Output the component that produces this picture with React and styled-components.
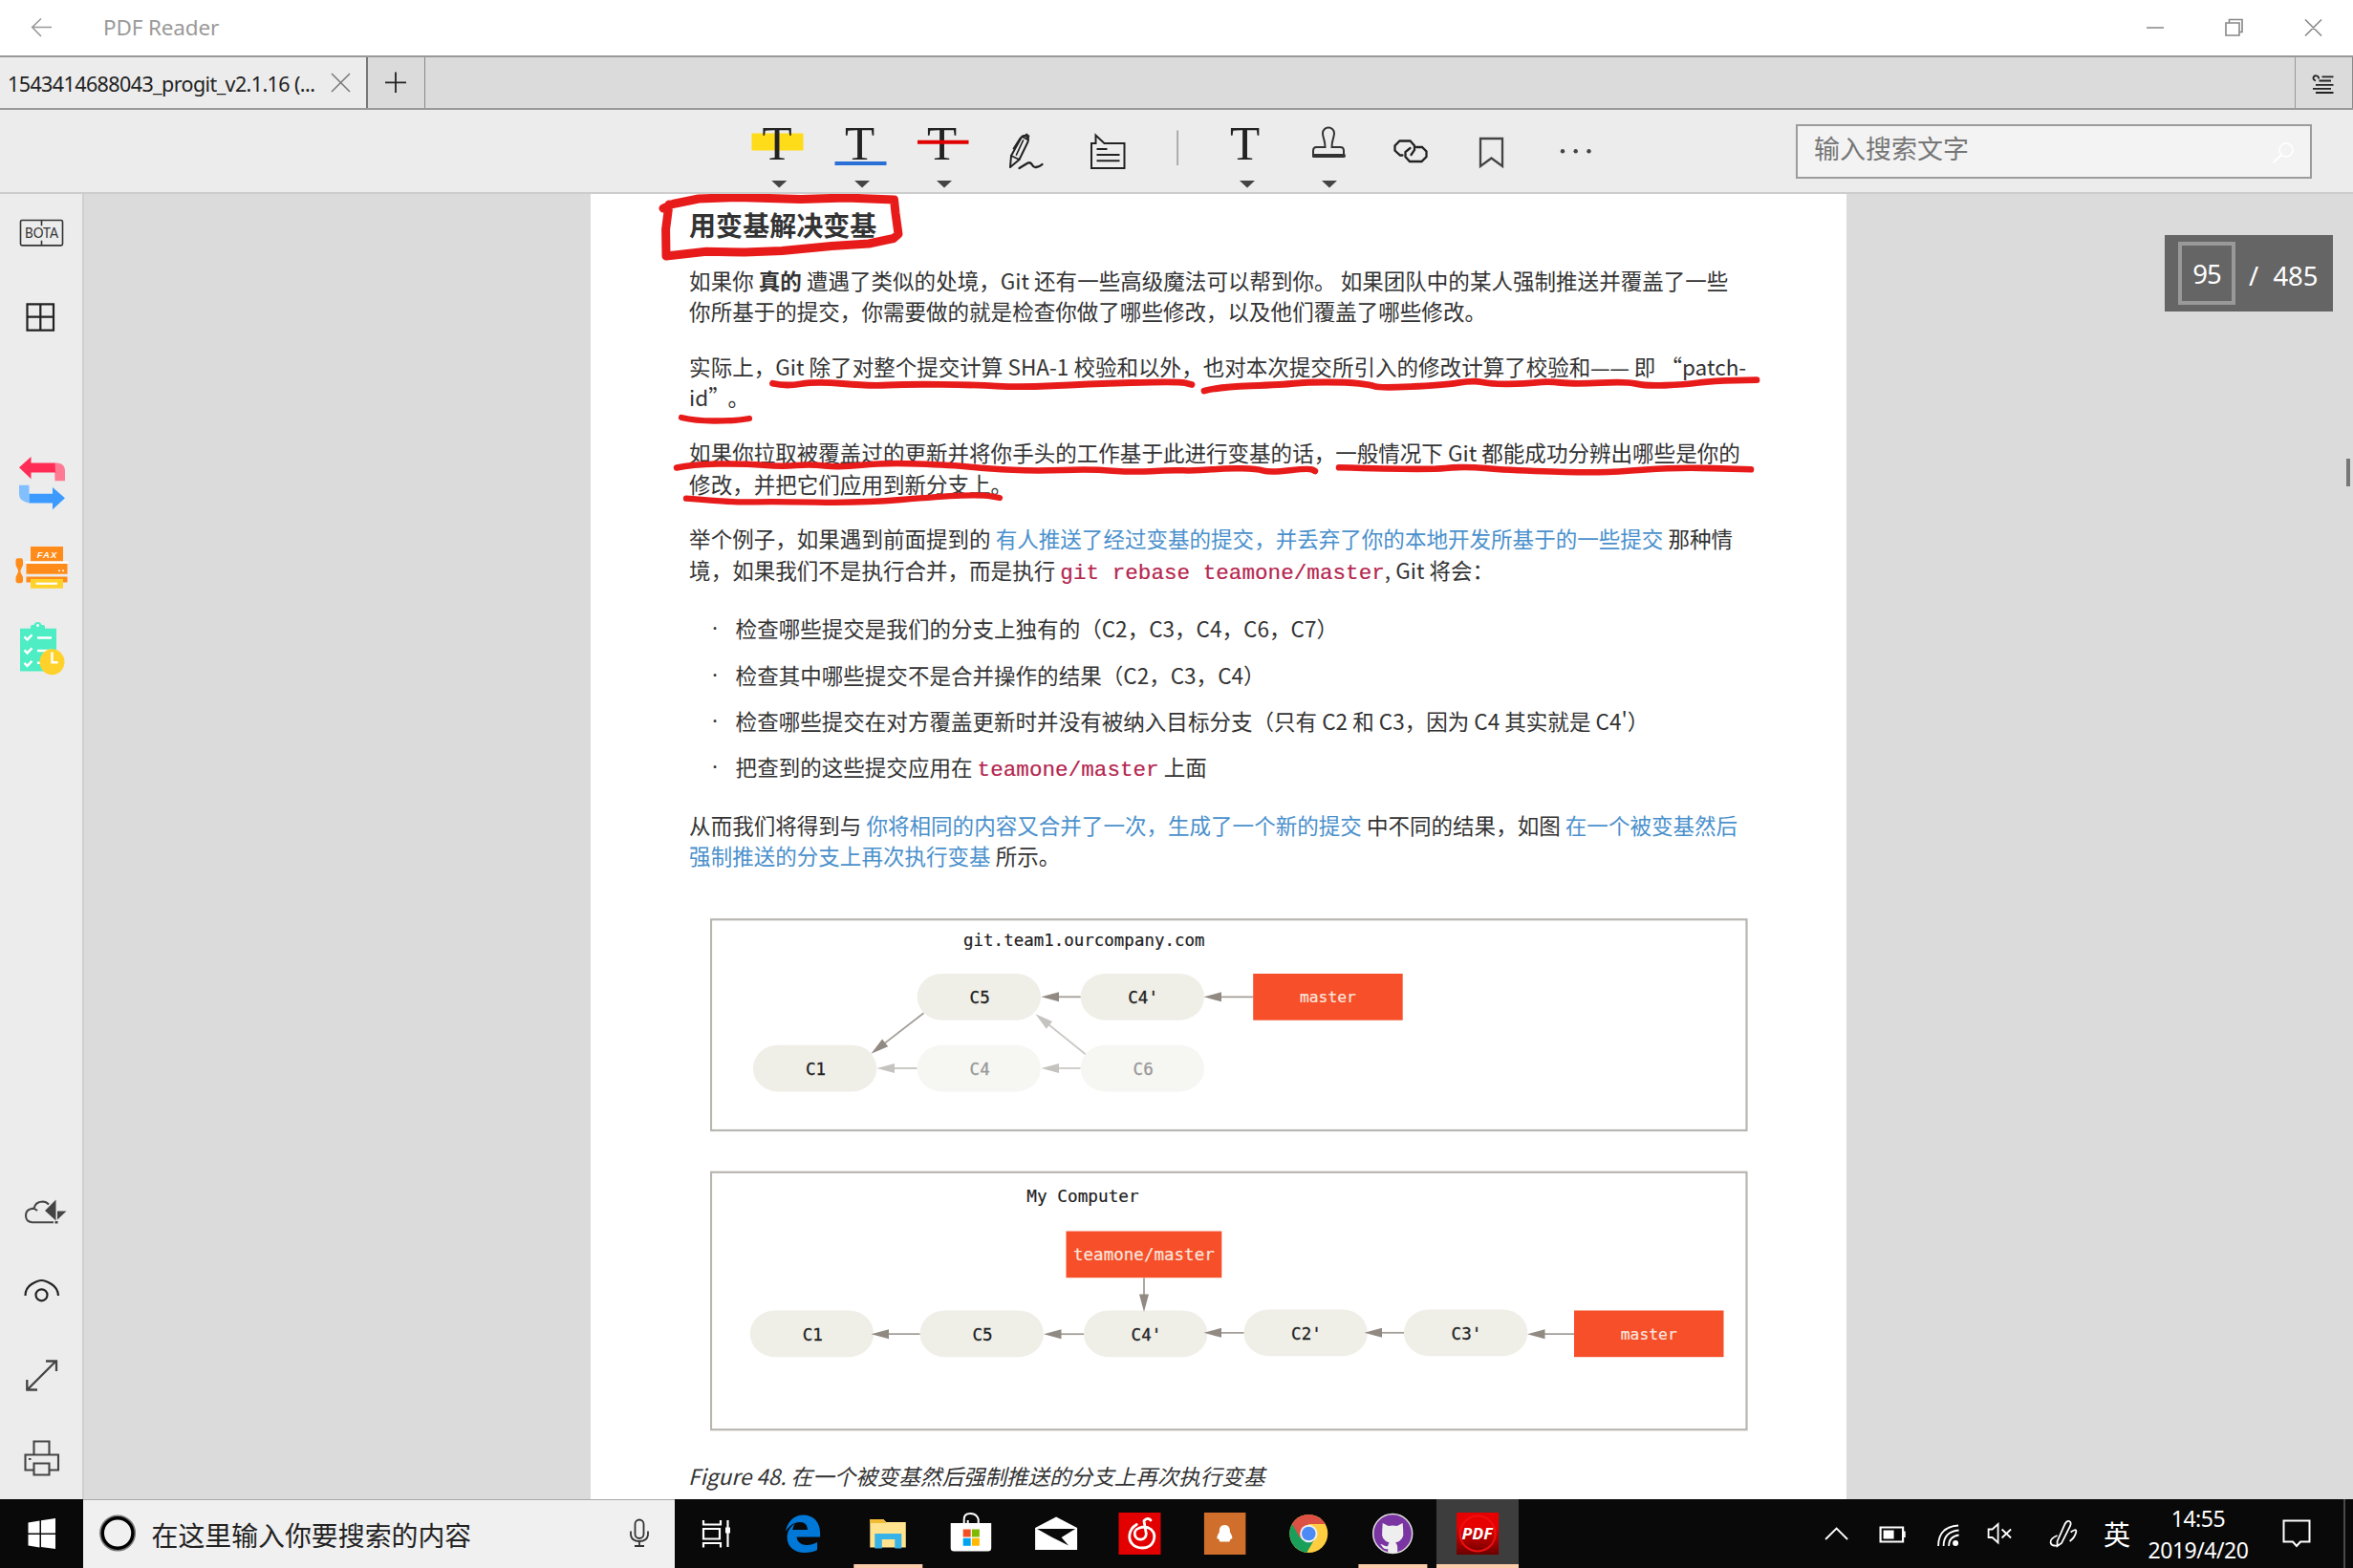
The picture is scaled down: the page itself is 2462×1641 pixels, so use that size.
import React from 'react';
import styled, { createGlobalStyle } from 'styled-components';

const UI = `"Noto Sans", "Noto Sans CJK SC", sans-serif`;
const CJK = `"Noto Sans CJK SC", "Noto Sans", sans-serif`;
const MONO = `"Liberation Mono", monospace`;

const Global = createGlobalStyle`
  * { box-sizing: border-box; }
  html, body { margin: 0; padding: 0; overflow: hidden; }
  svg { display: block; flex: none; }
`;

const Window = styled.div`
  width: 2462px;
  height: 1641px;
  display: flex;
  flex-direction: column;
  overflow: hidden;
  background: #dbdbdb;
  font-family: ${UI};
  color: #222;
`;

const TitleBar = styled.header`
  height: 58px;
  flex: none;
  display: flex;
  align-items: center;
  background: #fff;
`;

const AppTitle = styled.span`
  margin-left: 20px;
  flex: 1;
  font-size: 22.5px;
  line-height: 30px;
  letter-spacing: -0.15px;
  color: #9a9a9a;
`;

const TabBar = styled.nav`
  height: 57px;
  flex: none;
  display: flex;
  border-top: 2px solid #999;
  border-bottom: 2px solid #999;
  background: #dbdbdb;
`;

const Tab = styled.div`
  width: 385px;
  display: flex;
  align-items: center;
  padding-left: 8px;
  background: #ececec;
  border-right: 2px solid #777;
`;

const TabLabel = styled.span`
  width: 325px;
  padding-top: 1px;
  font-size: 21.5px;
  letter-spacing: -0.6px;
  white-space: nowrap;
`;

const TabButton = styled.div`
  width: ${(p) => p.$w}px;
  margin-left: ${(p) => p.$push || '0'};
  display: flex;
  border-left: ${(p) => (p.$left ? '1.5px solid #999' : '0')};
  border-right: 1.5px solid #888;
`;

const Toolbar = styled.div`
  height: 88px;
  flex: none;
  display: flex;
  background: #ececec;
  border-bottom: 2px solid #cdcdcd;
`;

const Tools = styled.div`
  display: flex;
  margin-left: 770px;
`;

const SearchField = styled.div`
  width: 540px;
  height: 57px;
  margin: 14.5px 0 0 187px;
  padding-left: 17px;
  display: flex;
  align-items: center;
  justify-content: space-between;
  background: #f3f3f3;
  border: 2px solid #9c9c9c;
  font: 27px/38px ${CJK};
  color: #767676;
`;

const Placeholder = styled.span`
  margin-bottom: 7px;
`;

const Workspace = styled.div`
  height: 1366px;
  flex: none;
  display: flex;
`;

const Sidebar = styled.aside`
  width: 88px;
  flex: none;
  display: flex;
  flex-direction: column;
  background: #ececec;
  border-right: 2px solid #cfcfcf;
`;

const Canvas = styled.main`
  flex: 1;
  display: flex;
  padding-left: 529.5px;
  background: #dbdbdb;
  position: relative;
`;

const Page = styled.article`
  width: 1314.5px;
  height: 1366px;
  padding: 11.5px 0 0 103.6px;
  overflow: hidden;
  background: #fff;
  position: relative;
  font-family: ${CJK};
  font-size: 22.53px;
  line-height: 32.4px;
  letter-spacing: 0.022px;
  color: #333;
  white-space: nowrap;
`;

const Heading = styled.h2`
  margin: 0 0 22px;
  font-size: 28px;
  line-height: 40px;
  font-weight: 700;
`;

const Para = styled.p`
  height: 64.8px;
  margin: 0 0 ${(p) => p.$after || 25.5}px;
`;

const Link = styled.span`
  color: #4a90cc;
`;

const Dashes = styled.span`
  font-family: "Noto Sans", sans-serif;
  font-size: 20.2px;
  line-height: 1;
`;

const WideQuote = styled.span`
  padding-right: 9px;
`;

const Code = styled.code`
  font: 22.6px/1 ${MONO};
  color: #b5264f;
  -webkit-text-stroke: 0.2px #b5264f;
`;

const List = styled.ul`
  margin: 0 0 28.4px;
  padding: 0 0 0 21px;
  list-style: none;
  display: flex;
  flex-direction: column;
  gap: 15.9px;
`;

const Item = styled.li`
  height: 32.4px;
  display: flex;
`;

const Bullet = styled.span`
  width: 27.5px;
  padding-left: 3px;
  font-family: "Noto Sans", sans-serif;
`;

const Figure = styled.figure`
  margin: 0 0 0 22.4px;
  display: flex;
  flex-direction: column;
  gap: 40.2px;
`;

const Caption = styled.figcaption`
  margin-top: 30.3px;
  margin-left: -1px;
  font-style: italic;
`;

const InkLayer = styled.div`
  position: absolute;
  left: 0;
  top: 0;
`;

const PageBadge = styled.div`
  position: absolute;
  left: 2176.5px;
  top: 43px;
  width: 176px;
  height: 80px;
  display: flex;
  align-items: center;
  padding-left: 14.5px;
  background: #656565;
  color: #fff;
  font-size: 27.5px;
`;

const PageInput = styled.div`
  width: 60px;
  height: 66px;
  display: flex;
  align-items: center;
  justify-content: center;
  border: 4px solid #999;
  letter-spacing: -1px;
`;

const PageTotal = styled.span`
  margin: 4px 0 0 14px;
  word-spacing: 8px;
`;

const ScrollThumb = styled.div`
  position: absolute;
  left: 2367px;
  top: 277px;
  width: 4px;
  height: 29px;
  background: #777;
`;

const Taskbar = styled.footer`
  height: 72px;
  flex: none;
  display: flex;
  background: #090909;
  color: #fff;
`;

const CortanaBox = styled.div`
  width: 619px;
  flex: none;
  display: flex;
  background: #f0f0f0;
  border-top: 1.5px solid #aaa;
  color: #222;
`;

const CortanaText = styled.span`
  width: 480px;
  padding-left: 1px;
  font: 27.9px/72px ${CJK};
`;

const TaskSlot = styled.div`
  width: ${(p) => (p.$active ? 86.5 : 88.6)}px;
  flex: none;
  height: 72px;
  display: flex;
  background: ${(p) => (p.$active ? '#3d3d3d' : 'transparent')};
  box-shadow: ${(p) => (p.$active ? 'inset 0 -4px #fccbaa' : 'none')};
`;

const Tray = styled.div`
  flex: 1;
  display: flex;
`;

const InputMode = styled.span`
  width: 47px;
  flex: none;
  padding-left: 1px;
  font: 28px/72px ${CJK};
`;

const Clock = styled.div`
  width: 105px;
  flex: none;
  display: flex;
  flex-direction: column;
  align-items: center;
  padding: 4px 0 0 1px;
  font-size: 23px;
  line-height: 33px;
  letter-spacing: -0.5px;
`;

/* A drawing whose shapes are given in window coordinates. */
const Art = ({ x, y, w, h, children }) => (
  <svg width={w} height={h} viewBox={`${x} ${y} ${w} ${h}`} fill="none">
    {children}
  </svg>
);

const Caret = ({ x }) => <path d={`M${x - 8} 189h16l-8 7.5z`} fill="#444" />;
const Letter = ({ x }) => (
  <text x={x} y="167" textAnchor="middle" fontFamily="Liberation Serif, serif" fontSize="51" fill="#222">T</text>
);

const tools = [
  <g key="hl"><path d="M786.5 139.5h54v18h-54z" fill="#ffdc19" /><Letter x={813} /><Caret x={815.3} /></g>,
  <g key="ul"><Letter x={899} /><path d="M873 169h54v4h-54z" fill="#2a6fd6" /><Caret x={901.6} /></g>,
  <g key="st"><Letter x={985.7} /><path d="M960 146.7h53.5v4H960z" fill="#e00000" /><Caret x={988} /></g>,
  <g key="pen" stroke="#222" strokeWidth="2" strokeLinejoin="round" strokeLinecap="round">
    <path d="M1056.5 175l1-12 10-18q2-4 5.500-2.500 3.500 2 2 6l-9 18.500z" />
    <path d="M1067 144.500l-7 11M1069 143l5.500 3M1057.500 163l8.500 4M1072 142l1.500-1.500 2.500 2-1 2.500M1070 147l-7 15" strokeWidth="1.7" />
    <path d="M1066 176l9-5.500q3-1 4.500 2t4 2.500q4-.5 6.500-3" strokeWidth="2.3" />
  </g>,
  <g key="note" stroke="#222" strokeWidth="2">
    <path d="M1142 176V150h4.500v-8.500l9 8.500H1176.500v26z" />
    <path d="M1147.500 156h11M1147.500 162h24M1147.500 168.300h24" />
  </g>,
];

const tools2 = [
  <g key="text"><Letter x={1302} /><Caret x={1304.5} /></g>,
  <g key="stamp" stroke="#333" strokeWidth="2">
    <path d="M1386.500 154c0-8-2.500-10-2.500-14.500a6 6 0 0 1 12 0c0 4.500-2.500 6.500-2.500 14.500h9q3.500 0 3.500 4v5.500h-32V158q0-4 3.500-4z" />
    <path d="M1375 163h31" strokeWidth="4" strokeLinecap="round" />
    <g stroke="none"><Caret x={1391} /></g>
  </g>,
  <g key="link" stroke="#222" strokeWidth="2.300" strokeLinecap="round">
    <path d="M1467 162.500h-2.500l-5.500-5v-5l5-5h11l4.500 5v4.500l-3.500 5" />
    <path d="M1475 155l-5 4v5l4.500 5h12.500l5-5v-5.500l-4.500-4.500h-6" />
  </g>,
  <g key="mark" stroke="#444" strokeWidth="2.300"><path d="M1549 145h23v29l-11.500-8.500L1549 174z" /></g>,
  <g key="more" fill="#444"><circle cx="1634.500" cy="158.300" r="2.200" /><circle cx="1648.200" cy="158.300" r="2.200" /><circle cx="1662" cy="158.300" r="2.200" /></g>,
];

const stretch = 'matrix(1 0 0 1.0331 0 -6.62)';

const sideIcons = [
  { h: 82, g: <g transform={stretch} stroke="#333" strokeWidth="1.600">
    <rect x="21.500" y="229.500" width="44" height="25.500" rx="1.500" /><path d="M43.500 230v5M43.500 250v5" />
    <text x="43.500" y="247.500" textAnchor="middle" fontFamily="Lato, sans-serif" fontSize="15" fill="#333" stroke="none" textLength="35" lengthAdjust="spacingAndGlyphs">BOTA</text></g> },
  { h: 91, g: <path transform={stretch} d="M28.500 314.500h27.500V341H28.500zM42.300 314v27M28 327.300h28.500" stroke="#222" strokeWidth="2.200" /> },
  { h: 170, g: <g transform={stretch}>
    <path d="M57 475.500h3q8 1 8 7.500v10.500H57.500z" fill="#ff7a92" />
    <path d="M20 480l12.500-11v6.500H57.500L58 485H32.500v6.500z" fill="#ff2c55" />
    <path d="M20 498h10.500v18Q20 514 20 507z" fill="#82bfff" />
    <path d="M68 511l-13-11v6.500H30.500V516H55v6.500z" fill="#3d9bff" /></g> },
  { h: 88, g: <g transform={stretch} fill="#ff8c1a">
    <path d="M32 560h34v15H32zM27.500 577.500h43V588h-43zM27.500 590.500h43v6h-43z" />
    <path d="M16.500 574q0-2 2-2h3.500q2 0 2 2v5l-2.500 5v2l2.500 5v4q0 2-2 2h-3.500q-2 0-2-2v-4l2.500-5v-2l-2.500-5z" />
    <path d="M26.500 575h45v2h-45z" fill="#fff" /><path d="M32 593h34v9.500H32z" fill="#ffd22b" /><path d="M37.500 596.500h22.500v2.200H37.500z" fill="#fff" />
    <circle cx="62" cy="584.500" r="1" fill="#fff" /><circle cx="66" cy="584.500" r="1" fill="#fff" />
    <text x="49.500" y="571.500" textAnchor="middle" fontFamily="Liberation Sans, sans-serif" fontWeight="700" fontStyle="italic" fontSize="9.500" letterSpacing="1" fill="#fff">FAX</text></g> },
  { h: 103, g: <g transform={stretch}>
    <path d="M21 643h11v-2q0-1.500 2-1.500h1.500a4.200 4.200 0 0 1 8 0H45q2 0 2 1.500v2h12v43.500H21z" fill="#4eedc4" /><circle cx="39.500" cy="640" r="1.500" fill="#fff" />
    <g stroke="#fff" strokeWidth="2.400"><path d="M25.500 651.500l3 3 5-5M25.500 665l3 3 5-5M25.500 678l3 3 5-5M39 652.500h15M39 665.500h15M39 678h6" /></g>
    <circle cx="54.500" cy="677" r="13" fill="#ffd22b" /><path d="M54.500 667v10.500h6" stroke="#fff" strokeWidth="2.400" /></g> },
];
const sideBottom = [
  { h: 81, g: <g>
    <path d="M56 1279.300H33.500q-6.500-.8-6.500-7t6-7.300h2.500q1-7 9-7.500 4 0 6.500 3M33.500 1264.500q3 0 5.500 2.500" stroke="#444" strokeWidth="2" />
    <path d="M47 1267l11.500-11.500v22zM60 1267.500h9.500l-9.500 9zM57.500 1278h3v2.500h-3z" fill="#444" /></g> },
  { h: 88, g: <g stroke="#222" strokeWidth="2.200"><path d="M26.500 1356q0-8 6.500-12t10.500-4 10.500 4 7 12" /><circle cx="43.500" cy="1355.300" r="6" /></g> },
  { h: 87, g: <path d="M29 1454l29.500-29.500M48 1424.500h11v10.500M28.300 1444v10.500H39" stroke="#444" strokeWidth="2.300" /> },
  { h: 84, g: <path d="M35.500 1522v-13.500H51.500V1522M35.500 1538.500H26.500v-16h34.500v16H51.500M35.500 1531.500h16V1543.500h-16zM30 1527h2.500" stroke="#444" strokeWidth="2.100" /> },
];

const stack = (items, start) => {
  let y = start;
  return items.map((it, i) => {
    const top = y;
    y += it.h;
    return <Art key={i} x={0} y={top} w={86} h={it.h}>{it.g}</Art>;
  });
};

const strokes = [
  { w: 6.8, p: [[808.5, 401.3], [822, 404.5], [854, 399], [909, 404], [949, 402], [1020, 402.7], [1067, 405.5], [1135, 402], [1233, 399], [1247, 402.5]] },
  { w: 6.8, p: [[1260, 409], [1275, 405], [1343, 402.5], [1366, 400], [1410, 400], [1434, 402.7], [1443, 406], [1509, 403.3], [1542, 398], [1560, 402], [1596, 401.7], [1619, 399], [1647, 402], [1702, 399.300], [1722, 404], [1762, 402.5], [1793, 398.5], [1838, 397.7]] },
  { w: 6.3, p: [[713, 437], [727.4, 440.5], [767, 440.5], [784, 438]] },
  { w: 6.5, p: [[708, 489.5], [723.5, 486], [779, 485], [818, 488.5], [848, 485.7], [878, 489.3], [925, 484.3], [996, 486.7], [1036, 490.7], [1083, 493], [1142, 491], [1186, 494.3], [1222, 492], [1253, 492.7], [1283, 490], [1315, 490.7], [1329, 494.5], [1370, 490], [1376, 493]] },
  { w: 6.6, p: [[1401, 489.3], [1493, 492], [1532, 488], [1576, 492], [1655, 494.5], [1690, 494], [1754, 489], [1832, 491.3]] },
  { w: 6.3, p: [[718, 521.7], [767, 526], [806, 524.7], [901, 526.5], [984, 519.5], [1028, 517.7], [1046, 521]] },
  { w: 9, p: [[694, 218], [704, 213.5], [731, 208], [771, 206.5], [838, 208.5], [885, 207], [935.5, 209], [937, 223], [940, 245], [935, 249.5], [909, 255], [870, 257.5], [818, 262.5], [779, 264], [739, 263.3], [697, 268], [696.6, 240], [700, 214]] },
];

const smooth = (pts) => {
  let d = `M${pts[0][0]} ${pts[0][1]}`;
  for (let i = 1; i < pts.length - 1; i++) {
    const mx = pts[i][0] * 0.5 + pts[i + 1][0] * 0.5;
    const my = pts[i][1] * 0.5 + pts[i + 1][1] * 0.5;
    d += `Q${pts[i][0]} ${pts[i][1]} ${mx} ${my}`;
  }
  const e = pts[pts.length - 1];
  return d + `L${e[0]} ${e[1]}`;
};
const sharp = (pts) => 'M' + pts.map((p) => p.join(' ')).join('L');

const Pill = ({ x, y, label, faded, w = 129.3 }) => (
  <g>
    <rect x={x} y={y} width={w} height="48.700" rx="26" ry="24.300" fill={faded ? '#f6f7f2' : '#efeee7'} />
    <text x={x + w / 2 + 0.8} y={y + 31} textAnchor="middle" fontSize="17.500" fill={faded ? '#999' : '#222'} stroke={faded ? '#999' : '#222'} strokeWidth=".3">{label}</text>
  </g>
);
const Tag = ({ x, y, w, label }) => (
  <g>
    <rect x={x} y={y} width={w} height="48.700" fill="#f64f29" />
    <text x={x + w / 2} y={y + 30} textAnchor="middle" fontSize={label.length > 8 ? 17.5 : 16.3} fill="#fbe6df" stroke="#fbe6df" strokeWidth=".2">{label}</text>
  </g>
);
const Arrow = ({ from, to, faded }) => {
  const len = Math.hypot(to[0] - from[0], to[1] - from[1]);
  const angle = (Math.atan2(to[1] - from[1], to[0] - from[0]) * 180) / Math.PI;
  return (
    <g transform={`translate(${from[0]} ${from[1]}) rotate(${angle})`}>
      <path d={`M0 0H${len - 10}`} stroke={faded ? '#cbc9c5' : '#a39e98'} strokeWidth="1.800" />
      <path d={`M${len} 0l-18.500-5v10z`} fill={faded ? '#c4c3bf' : '#918a82'} />
    </g>
  );
};

const DIAGRAM_FONT = '"DejaVu Sans Mono", monospace';

const TeamServer = () => (
  <Art x={743.5} y={962} w={1086} h={223.5}>
    <g fontFamily={DIAGRAM_FONT}>
      <rect x="744.500" y="963.300" width="1083.500" height="220.700" stroke="#b8b6b0" strokeWidth="2.200" />
      <text x="1134.800" y="991" textAnchor="middle" fontSize="17.450" fill="#222" stroke="#222" strokeWidth=".2">git.team1.ourcompany.com</text>
      <Arrow from={[1131.400, 1044.300]} to={[1090, 1044.300]} />
      <Arrow from={[1312, 1044.300]} to={[1260, 1044.300]} />
      <Arrow from={[967, 1061.300]} to={[912, 1103.700]} />
      <Pill x={960.2} y={1020} label="C5" />
      <Pill x={1131.2} y={1020} label="C4'" />
      <Tag x={1311.7} y={1020} w={156.5} label="master" />
      <Pill x={788.5} y={1094.7} label="C1" />
      <Pill x={960.2} y={1094.7} label="C4" faded />
      <Pill x={1131.2} y={1094.7} label="C6" faded />
      <Arrow from={[960, 1119]} to={[918, 1119]} faded />
      <Arrow from={[1131, 1119]} to={[1090, 1119]} faded />
      <Arrow from={[1136.2, 1104.300]} to={[1084, 1062.300]} faded />
    </g>
  </Art>
);

const MyComputer = () => (
  <Art x={743.5} y={1225.5} w={1086} h={272.5}>
    <g fontFamily={DIAGRAM_FONT}>
      <rect x="744.500" y="1227.300" width="1083.500" height="269.400" stroke="#b8b6b0" strokeWidth="2.200" />
      <text x="1133.500" y="1258.500" textAnchor="middle" fontSize="17.700" fill="#222" stroke="#222" strokeWidth=".2">My Computer</text>
      <Pill x={785.3} y={1372} label="C1" />
      <Pill x={963.1} y={1372} label="C5" />
      <Pill x={1134.5} y={1372} label="C4'" />
      <Pill x={1302} y={1371} label="C2'" />
      <Pill x={1469.5} y={1371} label="C3'" />
      <Tag x={1647.5} y={1372} w={156.500} label="master" />
      <Tag x={1116} y={1289} w={162.800} label="teamone/master" />
      <Arrow from={[1197.500, 1338]} to={[1197.500, 1373.500]} />
      <Arrow from={[963, 1396.700]} to={[912, 1396.700]} />
      <Arrow from={[1134.500, 1396.700]} to={[1092.500, 1396.700]} />
      <Arrow from={[1302, 1395.300]} to={[1260, 1395.300]} />
      <Arrow from={[1469.500, 1395.300]} to={[1428, 1395.300]} />
      <Arrow from={[1647.500, 1396.700]} to={[1598.500, 1396.700]} />
    </g>
  </Art>
);

const Underscore = ({ x }) => <path d={`M${x} 1637h72v4h-72z`} fill="#fccbaa" />;

const apps = [
  <g key="view" stroke="#fff" strokeWidth="2.200"><path d="M735.500 1591v4.500h18V1591M735.500 1619.500V1615h18v4.500M735.500 1600h17v10.500h-17zM761 1591v28" /><path d="M758.500 1598.500h5v6h-5z" fill="#fff" stroke="none" /></g>,
  <path key="edge" fill="#0078d7" d="M822 1603c2-11 9-17.500 18.500-17.500 11 0 17.700 8 17.700 18.500v4.500h-24.500c.5 5.500 5 8.500 10.500 8.500 4 0 7.500-1 11-3v8c-4 2.200-8.500 3-13 3-10.500 0-18.500-6-18.500-16 0-6.500 3.500-11.500 8.500-14.500-1.500 1.700-2.500 4-2.700 6.500h15.500c0-5-2.500-8-8-8-6 0-11.500 4-15 10z" />,
  <g key="files"><path d="M910 1590h14l3 3h20.500v26.500H910z" fill="#ffe38e" /><path d="M910 1590h14l3 4h-17z" fill="#f2bb35" /><path d="M915 1605h28v15.500h-7V1611h-13.500v9.500H915z" fill="#37b3e8" /><Underscore x={893} /></g>,
  <g key="store"><path d="M995 1594h42.500v26q0 3.500-3.500 3.500h-35.500q-3.500 0-3.500-3.500z" fill="#fff" /><path d="M1009 1595v-5q0-6 6.500-6t8.500 6v5M1013 1595v-4" stroke="#fff" strokeWidth="2" /><path d="M1008 1600.500h8v8h-8z" fill="#f25022" /><path d="M1017.200 1600.500h8v8h-8z" fill="#7fba00" /><path d="M1008 1609.800h8v8h-8z" fill="#00a4ef" /><path d="M1017.200 1609.800h8v8h-8z" fill="#ffb900" /></g>,
  <g key="mail"><path d="M1083 1599l22-11.500 22 11.500v23h-44z" fill="#fff" /><path d="M1085 1600h40l-14.500 9 7.500 8.500-18-9z" fill="#0a0a0a" /></g>,
  <g key="music"><path d="M1171 1583h44v44h-44z" fill="#e20000" /><path d="M1197.500 1591.500q4-4 7-.5M1197.500 1592l2.300 13a6 6 0 1 1-8-5.500q7-3.500 13 1c7 6.500 3 19.500-9 19.500-9 0-14-6-13.500-13 .5-5 3-9 7.500-11.500" stroke="#fff" strokeWidth="2.800" strokeLinecap="round" /></g>,
  <g key="qq"><path d="M1260 1583h43.500v44H1260z" fill="#d06f2c" /><path d="M1281.500 1596c4 0 5.500 3 5.500 6 0 3 2.500 4 2.500 8l-2 1-1 2.500h-10l-1-2.500-2-1c0-4 2.500-5 2.500-8 0-3 1.500-6 5.500-6z" fill="#fff" /></g>,
  <g key="chrome"><circle cx="1369" cy="1605" r="20" fill="#ffcd40" /><path d="M1369 1605L1351.700 1595a20 20 0 0 0 15.300 30l8-14z" fill="#1a9f5b" /><path d="M1351.700 1595a20 20 0 0 1 34.600 0H1369l-8.700 15z" fill="#dd5144" /><circle cx="1369" cy="1605" r="9.200" fill="#f1f1f1" /><circle cx="1369" cy="1605" r="7.300" fill="#4c8bf5" /></g>,
  <g key="cat"><circle cx="1457.500" cy="1605" r="20.500" fill="#7a35a3" stroke="#ddd" strokeWidth="1.500" /><path d="M1447 1594l6 3q4.500-1 9 0l6-3 .5 8q1.500 10-8 12.500 2 2 2 5v5.500h-10v-4c-5 1-5.500-2.500-8-5 3 0 4 3 8 2q0-2 1.500-3.500-9-2.500-7.500-12.500z" fill="#eee" /><Underscore x={1421.700} /></g>,
];

export default function App() {
  return (
    <Window lang="zh-CN">
      <Global />
      <TitleBar>
        <Art x={0} y={0} w={88} h={58}><path d="M54 28.500H34M43 19.500l-9.300 9 9.300 9.500" stroke="#999" strokeWidth="1.600" /></Art>
        <AppTitle>PDF Reader</AppTitle>
        <Art x={2218} y={0} w={244} h={58}>
          <path d="M2246 29h18M2329 24h14v13h-14zM2332.500 24v-3.500h13.500V33.500H2343M2412 20.500l17 17M2429 20.500l-17 17" stroke="#888" strokeWidth="1.600" />
        </Art>
      </TitleBar>

      <TabBar>
        <Tab>
          <TabLabel>1543414688043_progit_v2.1.16 (...</TabLabel>
          <Art x={333} y={60} w={50} h={53}><path d="M347 77l19 19M366 77l-19 19" stroke="#777" strokeWidth="1.500" /></Art>
        </Tab>
        <TabButton $w={60}>
          <Art x={385} y={60} w={58} h={53}><path d="M403 86.300h22M414 75.500v21.500" stroke="#222" strokeWidth="1.800" /></Art>
        </TabButton>
        <TabButton $w={61} $push="auto" $left>
          <Art x={2402.500} y={60} w={58} h={53}>
            <path d="M2430 80.300h12M2427 84.500h12.500M2423.500 88.800h18.500M2420.500 92.800h19M2423.500 97h18.500M2423.500 84.500q-3-1-2.500-3.500 1-2.500 4-1.500 2 1 1.500 3" stroke="#222" strokeWidth="1.800" />
          </Art>
        </TabButton>
      </TabBar>

      <Toolbar>
        <Tools>
          {tools.map((g, i) => <Art key={i} x={770 + i * 86.5} y={115} w={86.5} h={86}>{g}</Art>)}
          <Art x={1202.5} y={115} w={57} h={86}><path d="M1231.600 136.500v36.500" stroke="#999" strokeWidth="1.500" /></Art>
          {tools2.map((g, i) => <Art key={i} x={1259.5 + i * 86.5} y={115} w={86.5} h={86}>{g}</Art>)}
        </Tools>
        <SearchField>
          <Placeholder>输入搜索文字</Placeholder>
          <Art x={2366} y={130} w={50} h={53}><path d="M2377.500 168.500l8.500-8.500" stroke="#fff" strokeWidth="2" /><circle cx="2391" cy="155" r="7" stroke="#fff" strokeWidth="1.600" /></Art>
        </SearchField>
      </Toolbar>

      <Workspace>
        <Sidebar>
          {stack(sideIcons, 203)}
          <Art x={0} y={737} w={86} h={492} />
          {stack(sideBottom, 1229)}
        </Sidebar>
        <Canvas>
          <Page>
            <Heading>用变基解决变基</Heading>
            <Para>
              如果你 <b>真的</b> 遭遇了类似的处境，Git 还有一些高级魔法可以帮到你。 如果团队中的某人强制推送并覆盖了一些<br />
              你所基于的提交，你需要做的就是检查你做了哪些修改，以及他们覆盖了哪些修改。
            </Para>
            <Para>
              实际上，Git 除了对整个提交计算 SHA-1 校验和以外，也对本次提交所引入的修改计算了校验和<Dashes>——</Dashes> 即 “patch-<br />
              id<WideQuote>”</WideQuote>。
            </Para>
            <Para>
              如果你拉取被覆盖过的更新并将你手头的工作基于此进行变基的话，一般情况下 Git 都能成功分辨出哪些是你的<br />
              修改，并把它们应用到新分支上。
            </Para>
            <Para $after={29.2}>
              举个例子，如果遇到前面提到的 <Link>有人推送了经过变基的提交，并丢弃了你的本地开发所基于的一些提交</Link> 那种情<br />
              境，如果我们不是执行合并，而是执行 <Code>git rebase teamone/master</Code>, Git 将会：
            </Para>
            <List>
              <Item><Bullet>·</Bullet><span>检查哪些提交是我们的分支上独有的（C2，C3，C4，C6，C7）</span></Item>
              <Item><Bullet>·</Bullet><span>检查其中哪些提交不是合并操作的结果（C2，C3，C4）</span></Item>
              <Item><Bullet>·</Bullet><span>检查哪些提交在对方覆盖更新时并没有被纳入目标分支（只有 C2 和 C3，因为 C4 其实就是 C4'）</span></Item>
              <Item><Bullet>·</Bullet><span>把查到的这些提交应用在 <Code>teamone/master</Code> 上面</span></Item>
            </List>
            <Para $after={49.6}>
              从而我们将得到与 <Link>你将相同的内容又合并了一次，生成了一个新的提交</Link> 中不同的结果，如图 <Link>在一个被变基然后</Link><br />
              <Link>强制推送的分支上再次执行变基</Link> 所示。
            </Para>
            <Figure>
              <TeamServer />
              <MyComputer />
            </Figure>
            <Caption>Figure 48. 在一个被变基然后强制推送的分支上再次执行变基</Caption>
            <InkLayer>
              <Art x={618} y={203} w={1314.5} h={400}>
                {strokes.map((s, i) => (
                  <path key={i} d={s.w > 8 ? sharp(s.p) : smooth(s.p)} stroke="#e81b1b" strokeWidth={s.w} strokeLinecap="round" strokeLinejoin="round" />
                ))}
              </Art>
            </InkLayer>
          </Page>
          <PageBadge>
            <PageInput>95</PageInput>
            <PageTotal>/ 485</PageTotal>
          </PageBadge>
          <ScrollThumb />
        </Canvas>
      </Workspace>

      <Taskbar>
        <Art x={0} y={1569} w={86.5} h={72}><path d="M29.500 1593.500l12-2v13h-12zM43 1591.300l15-2.300v15.500H43zM29.500 1606h12v13.500l-12-2zM43 1606h15v15l-15-2z" fill="#fff" /></Art>
        <CortanaBox>
          <Art x={86.5} y={1570.5} w={71} h={70}><circle cx="122.600" cy="1605" r="17.500" stroke="#777" strokeWidth="3" /><circle cx="122.600" cy="1605" r="15.800" stroke="#000" strokeWidth="3.400" /></Art>
          <CortanaText>在这里输入你要搜索的内容</CortanaText>
          <Art x={638} y={1570.5} w={60} h={70}><path d="M664.500 1595.500a4.500 4.500 0 0 1 9 0V1606a4.500 4.500 0 0 1-9 0zM660 1603v4q1 6.500 9 6.500t9-6.500v-4M669 1613.500v5M664 1618.500h10" stroke="#333" strokeWidth="1.800" /></Art>
        </CortanaBox>
        {apps.map((g, i) => (
          <TaskSlot key={i}>
            <Art x={705.5 + i * 88.6} y={1569} w={88.6} h={72}>{g}</Art>
          </TaskSlot>
        ))}
        <TaskSlot $active>
          <Art x={1502.9} y={1569} w={86.5} h={72}>
            <defs><linearGradient id="pdf" x1="0" y1="0" x2="0" y2="1"><stop offset=".35" stopColor="#e60000" /><stop offset="1" stopColor="#6a0000" /></linearGradient></defs>
            <path d="M1524 1583h44v44h-44z" fill="url(#pdf)" /><circle cx="1546" cy="1605" r="18.500" stroke="#f01010" strokeWidth="2" />
            <text x="1545.500" y="1610.500" textAnchor="middle" fontFamily="Open Sans, sans-serif" fontWeight="700" fontStyle="italic" fontSize="16" textLength="32" lengthAdjust="spacingAndGlyphs" fill="#fff">PDF</text>
          </Art>
        </TaskSlot>
        <Tray>
          <Art x={1589.4} y={1569} w={610.6} h={72}>
            <g stroke="#fff" strokeWidth="1.800">
              <path d="M1910.500 1611l11.500-11.500 11.500 11.500" />
              <path d="M1968 1598.500h23.500v15H1968zM1993 1602.500v6.500" strokeWidth="2.200" /><path d="M1971 1601.500h11v9h-11z" fill="#fff" stroke="none" />
              <path d="M2028.500 1618q0-20 21-21.500M2034 1618q0-15 16-16.500M2039.500 1618q0-10 10.500-11.500" /><circle cx="2046.500" cy="1615" r="3" fill="#fff" stroke="none" />
              <path d="M2081 1600.500h4l6-5.500v19.500l-6-5.500h-4zM2095 1600.500l9.500 9M2104.500 1600.500l-9.500 9" />
              <path d="M2153 1613l8-18q2-4 4.500-3t1 5l-9 18-4.500 3zM2167 1603.500q7-5 5.500.5t-6.500 9M2153 1607q-8 3.500-7 7.500t8 3" />
            </g>
          </Art>
          <InputMode>英</InputMode>
          <Clock><span>14:55</span><span>2019/4/20</span></Clock>
          <Art x={2352} y={1569} w={110} h={72}><path d="M2389.500 1591.500h27V1613.500h-9.500l-4 4.500-4-4.500h-9.500z" stroke="#fff" strokeWidth="2" /><path d="M2453 1569v72" stroke="#777" strokeWidth="1.200" /></Art>
        </Tray>
      </Taskbar>
    </Window>
  );
}
